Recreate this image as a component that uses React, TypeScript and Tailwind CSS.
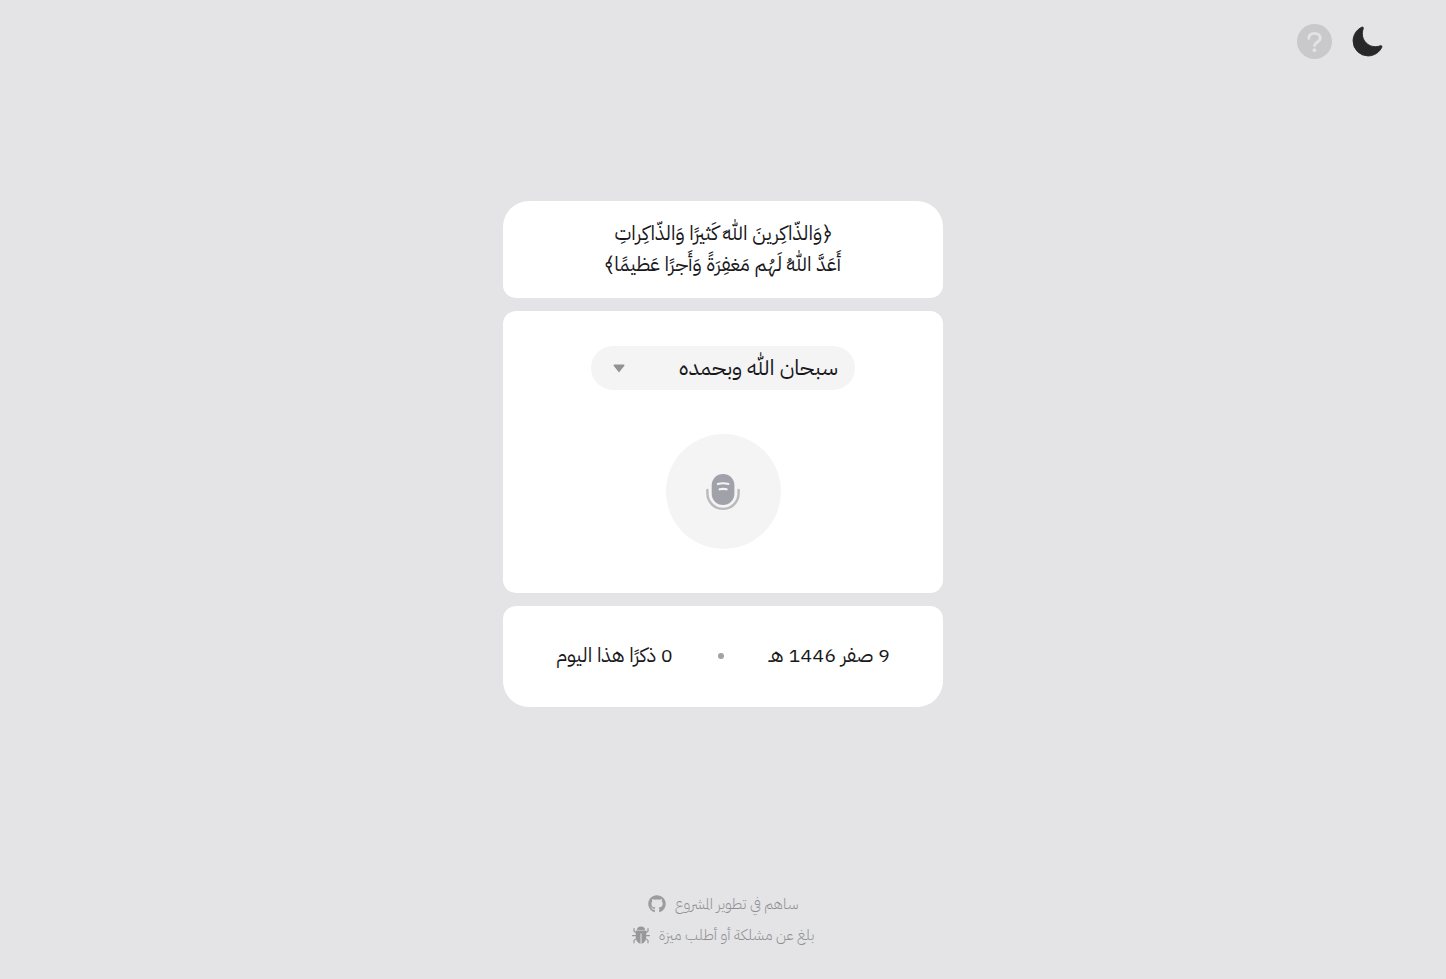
import { useState } from "react";
import { IoMoon } from "react-icons/io5";
import { FaGithub } from "react-icons/fa";

const phrases = ["سبحان ﷲ وبحمده"];

function MicIcon() {
  return (
    <svg viewBox="0 0 36 40" className="h-10 w-9" aria-hidden="true">
      <path
        d="M2.4 17.900v3.4a15.6 15.6 0 0 0 31.2 0v-3.4"
        fill="none"
        stroke="#b9b9be"
        strokeWidth="2.4"
        strokeLinecap="round"
      />
      <rect x="6.7" y="2" width="22.7" height="31" rx="11.3" fill="#a1a1aa" />
      <path
        d="M12.8 12q5.2-1.5 10.600 0M14.600 17.3q3.5-.8 7 0"
        fill="none"
        stroke="#f4f4f5"
        strokeWidth="2.2"
        strokeLinecap="round"
      />
    </svg>
  );
}

function HelpIcon() {
  return (
    <svg viewBox="0 0 35 35" className="size-[35px]" aria-hidden="true">
      <circle cx="17.5" cy="17.5" r="17.5" fill="#c9c9cb" />
      <path
        d="M11.8 14.4c0-3.2 2.5-5 5.7-5s5.7 1.8 5.7 4.8c0 4.2-5.7 3.8-5.7 7.4"
        fill="none"
        stroke="#e4e4e7"
        strokeWidth="2.8"
        strokeLinecap="round"
      />
      <circle cx="17.4" cy="26.2" r="1.9" fill="#e4e4e7" />
    </svg>
  );
}

function BugIcon() {
  return (
    <svg viewBox="0 0 18 18" className="size-[18px]" fill="currentColor" aria-hidden="true">
      <path d="M5 4a4 3.600 0 0 1 8 0z" />
      <path d="M3.800 4.600h10.400v6.600c0 3.400-2 5.900-4.700 6.500V7.500h-1v10.200c-2.700-.6-4.700-3.100-4.700-6.500z" />
      <path
        d="M2 2.600v2.600l2.200 1.600M16 2.600v2.600l-2.200 1.600M.5 9.700h4M17.500 9.700h-4M2 16.800v-2.400l2.300-1.800M16 16.800v-2.400l-2.300-1.800"
        fill="none"
        stroke="currentColor"
        strokeWidth="1.2"
        strokeLinecap="round"
        strokeLinejoin="round"
      />
    </svg>
  );
}

export default function App() {
  const [phrase, setPhrase] = useState(phrases[0]);
  return (
    <div
      dir="rtl"
      lang="ar"
      className="flex min-h-screen flex-col bg-[#e4e4e6] font-['IBM_Plex_Sans_Arabic','Noto_Sans_Arabic',sans-serif] text-zinc-900"
    >
      <header className="flex items-center gap-[19px] px-[62px] py-6">
        <button type="button" aria-label="الوضع الليلي" className="text-[#27272a]">
          <IoMoon className="size-[33px]" strokeWidth={14} strokeLinejoin="round" />
        </button>
        <button type="button" aria-label="مساعدة">
          <HelpIcon />
        </button>
      </header>

      <main className="mx-auto flex w-full max-w-[440px] flex-1 flex-col justify-center gap-[13px]">
        <section className="rounded-t-[26px] rounded-b-[13px] bg-white pt-[17px] pb-[18px] text-center text-[20px] leading-[31px]">
          <p>
            ﴿وَالذّاكِرينَ ﷲَ كَثيرًا وَالذّاكِراتِ
            <br />
            أَعَدَّ ﷲُ لَهُم مَغفِرَةً وَأَجرًا عَظيمًا﴾
          </p>
        </section>

        <section className="flex flex-col items-center gap-11 rounded-[13px] bg-white pt-[35px] pb-11">
          <div className="grid w-[264px] items-center">
            <select
              aria-label="الذكر"
              value={phrase}
              onChange={(e) => setPhrase(e.target.value)}
              className="col-start-1 row-start-1 h-11 w-full appearance-none rounded-full bg-zinc-100 ps-[17px] pe-12 pb-[2px] text-[22px]"
            >
              {phrases.map((p) => (
                <option key={p}>{p}</option>
              ))}
            </select>
            <svg
              viewBox="0 0 12 10"
              className="pointer-events-none col-start-1 row-start-1 me-[22px] h-[10px] w-3 justify-self-end"
              aria-hidden="true"
            >
              <path d="M1.2 2.2h9.6L6 8.4z" fill="#929296" stroke="#929296" strokeWidth="1.4" strokeLinejoin="round" />
            </svg>
          </div>
          <button
            type="button"
            aria-label="ابدأ التسجيل"
            className="flex size-[115px] items-center justify-center rounded-full bg-zinc-100"
          >
            <MicIcon />
          </button>
        </section>

        <section className="flex items-center justify-between rounded-t-[13px] rounded-b-[26px] bg-white px-[53px] pt-[34px] pb-9 text-[20px] leading-[31px]">
          <span>9 صفر 1446 هـ</span>
          <span className="size-[6px] rounded-full bg-[#a1a1a6]" />
          <span>0 ذكرًا هذا اليوم</span>
        </section>
      </main>

      <footer className="flex flex-col items-center pt-16 pb-7 text-[15px] leading-[31px] font-light text-[#8e8e92] [font-feature-settings:'dlig']">
        <a href="#contribute" className="flex items-center gap-[9px]">
          ساهم في تطوير المشروع
          <span className="pb-[2px] text-[#9c9ca0]">
            <FaGithub className="size-[18px]" />
          </span>
        </a>
        <a href="#report" className="flex items-center gap-[9px]">
          بلغ عن مشلكة أو أطلب ميزة
          <span className="pb-[2px] text-[#98989c]">
            <BugIcon />
          </span>
        </a>
      </footer>
    </div>
  );
}
